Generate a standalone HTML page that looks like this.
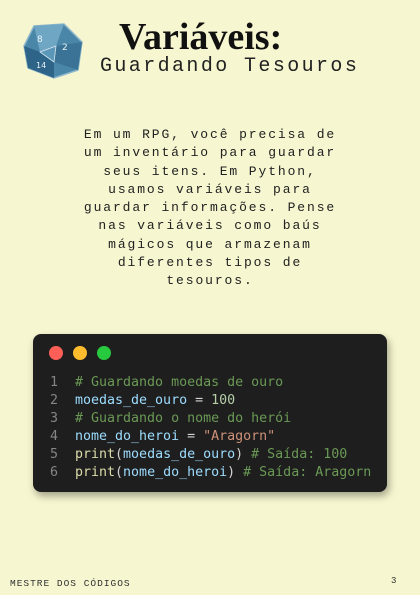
<!DOCTYPE html>
<html><head><meta charset="utf-8"><style>
html,body{margin:0;padding:0}
body{width:420px;height:595px;background:#f6f6d0;position:relative;overflow:hidden;font-family:"Liberation Mono",monospace;color:#222}
.t{position:absolute;left:119px;top:15px;font-family:"Liberation Serif",serif;font-weight:bold;font-size:38px;color:#111;letter-spacing:0px}
.s{position:absolute;left:100px;top:55px;font-size:20px;letter-spacing:2.4px;color:#222}
.p{position:absolute;left:60px;width:300px;top:126px;text-align:center;font-size:13px;letter-spacing:1.9px;line-height:18.25px;color:#222}
.code{position:absolute;left:33px;top:334px;width:354px;height:158px;background:#1e1e1e;border-radius:8px;box-shadow:2px 4px 8px rgba(0,0,0,.35)}
.d{position:absolute;top:12px;width:14px;height:14px;border-radius:50%}
pre{position:absolute;left:17px;top:40px;margin:0;font-family:"DejaVu Sans Mono",monospace;font-size:13.3px;line-height:18px;color:#9cdcfe}
.n{color:#858585;display:inline-block;width:25px}.c{color:#6a9955}.f{color:#dcdcaa}.o{color:#d4d4d4}.g{color:#b5cea8}.r{color:#ce9178}
.ft{position:absolute;left:10px;top:578px;font-size:9.5px;letter-spacing:1px;color:#333}
.pg{position:absolute;left:391px;top:576px;font-size:9px;color:#333}
</style></head><body>
<svg style="position:absolute;left:22px;top:22px" width="64" height="58" viewBox="0 0 64 58">
<polygon points="12,4 42,2 60,20 56,48 32,56 6,46 2,24" fill="#4a86a8" stroke="#8fb8cc" stroke-width="1.5"/>
<polygon points="12,4 42,2 34,24 18,30" fill="#6ea6c4"/>
<polygon points="34,24 60,20 56,48 32,40" fill="#3b7396"/>
<polygon points="2,24 18,30 32,40 32,56 6,46" fill="#2d6488"/>
<path d="M18 30 L34 24 L32 40 Z" fill="#5b97b8" stroke="#d8e8ef" stroke-width="0.8"/>
<text x="15" y="20" font-size="9" fill="#e8f2f6" font-family="DejaVu Sans">8</text>
<text x="40" y="28" font-size="9" fill="#e8f2f6" font-family="DejaVu Sans">2</text>
<text x="14" y="46" font-size="8" fill="#e8f2f6" font-family="DejaVu Sans">14</text>
</svg>
<div class="t">Variáveis:</div>
<div class="s">Guardando Tesouros</div>
<div class="p">Em um RPG, você precisa de<br>um inventário para guardar<br>seus itens. Em Python,<br>usamos variáveis para<br>guardar informações. Pense<br>nas variáveis como baús<br>mágicos que armazenam<br>diferentes tipos de<br>tesouros.</div>
<div class="code">
<div class="d" style="left:16px;background:#ff5f56"></div>
<div class="d" style="left:40px;background:#ffbd2e"></div>
<div class="d" style="left:64px;background:#27c93f"></div>
<pre><span class="n">1</span><span class="c"># Guardando moedas de ouro</span>
<span class="n">2</span>moedas_de_ouro <span class="o">=</span> <span class="g">100</span>
<span class="n">3</span><span class="c"># Guardando o nome do herói</span>
<span class="n">4</span>nome_do_heroi <span class="o">=</span> <span class="r">"Aragorn"</span>
<span class="n">5</span><span class="f">print</span><span class="o">(</span>moedas_de_ouro<span class="o">)</span> <span class="c"># Saída: 100</span>
<span class="n">6</span><span class="f">print</span><span class="o">(</span>nome_do_heroi<span class="o">)</span> <span class="c"># Saída: Aragorn</span></pre>
</div>
<div class="ft">MESTRE DOS CÓDIGOS</div>
<div class="pg">3</div>
</body></html>
